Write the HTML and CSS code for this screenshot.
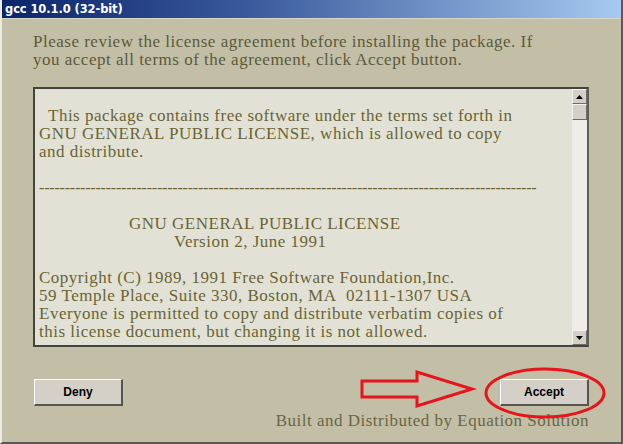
FILE: index.html
```html
<!DOCTYPE html>
<html>
<head>
<meta charset="utf-8">
<link rel="stylesheet" href="styles.css">
</head>
<body>
<div class="window">
  <div class="titlebar">gcc 10.1.0 (32-bit)</div>
  <div class="content">
    <p class="intro">Please review the license agreement before installing the package. If<br>you accept all terms of the agreement, click Accept button.</p>
    <div class="license">
      <div class="license-text">
        <p class="first">This package contains free software under the terms set forth in<br>GNU GENERAL PUBLIC LICENSE, which is allowed to copy<br>and distribute.</p>
        <p class="dashes">-------------------------------------------------------------------------------------------------</p>
        <p><span class="title1">GNU GENERAL PUBLIC LICENSE</span><br><span class="title2">Version 2, June 1991</span></p>
        <p>Copyright (C) 1989, 1991 Free Software Foundation,Inc.<br>59 Temple Place, Suite 330, Boston, MA&nbsp;&nbsp;02111-1307 USA<br>Everyone is permitted to copy and distribute verbatim copies of<br>this license document, but changing it is not allowed.</p>
      </div>
      <div class="scrollbar">
        <div class="sb-btn"><svg width="7" height="4" viewBox="0 0 7 4"><path d="M3.5 0 L7 4 L0 4 Z" fill="#000"/></svg></div>
        <div class="sb-thumb"></div>
        <div class="sb-track"></div>
        <div class="sb-btn"><svg width="7" height="4" viewBox="0 0 7 4"><path d="M0 0 L7 0 L3.5 4 Z" fill="#000"/></svg></div>
      </div>
    </div>
    <div class="actions">
      <button class="btn">Deny</button>
      <button class="btn">Accept</button>
    </div>
    <p class="credit">Built and Distributed by Equation Solution</p>
  </div>
  <svg class="annotation" width="623" height="444" viewBox="0 0 623 444">
    <polygon points="362,381 417,381 417,372 472,389 417,406 417,397 362,397" fill="none" stroke="#e8141c" stroke-width="3" stroke-linejoin="miter"/>
    <ellipse cx="545" cy="393" rx="59" ry="24" fill="none" stroke="#e8141c" stroke-width="3"/>
  </svg>
</div>
</body>
</html>
```
FILE: styles.css
```css
html, body {
  margin: 0;
  padding: 0;
  background: #c3bfa6;
}

.window {
  position: relative;
  width: 623px;
  height: 444px;
  box-sizing: border-box;
  background: #c3bfa6;
  border-left: 2px solid #ecebe2;
  border-right: 2px solid #5a5a55;
  border-bottom: 2px solid #5a5a55;
  overflow: hidden;
  display: flex;
  flex-direction: column;
}

.titlebar {
  height: 18px;
  margin-left: -2px;
  padding-left: 5px;
  background: linear-gradient(to right, #0a246a 0%, #3a5a9c 40%, #a6caf0 100%);
  color: #fff;
  font-family: "DejaVu Sans", sans-serif;
  font-weight: bold;
  font-size: 11.5px;
  line-height: 18px;
  letter-spacing: -0.1px;
  border-bottom: 1px solid #d8d6c8;
}

.content {
  flex: 1;
  display: flex;
  flex-direction: column;
  padding: 0 32px 0 31px;
}

.intro {
  margin: 14px 0 0 0;
  font-family: "Liberation Serif", serif;
  font-size: 17px;
  line-height: 18px;
  letter-spacing: 0.5px;
  color: #5b5a3a;
}

.license {
  margin-top: 18px;
  height: 260px;
  box-sizing: border-box;
  border: 2px solid #44443e;
  border-right-color: #5e5e58;
  background: #e2e1d5;
  display: flex;
}

.license-text {
  flex: 1;
  padding: 18px 0 0 4px;
  font-family: "Liberation Serif", serif;
  font-size: 17px;
  line-height: 18px;
  letter-spacing: 0.5px;
  color: #6a6434;
  overflow: hidden;
}

.license-text p {
  margin: 0 0 18px 0;
  white-space: nowrap;
}

.license-text .first {
  text-indent: 9px;
}

.license-text .dashes {
  letter-spacing: -0.2px;
  font-size: 16px;
}

.title1 {
  padding-left: 90px;
}

.title2 {
  padding-left: 135px;
}

.scrollbar {
  width: 15px;
  display: flex;
  flex-direction: column;
  background: #f1f0ea;
}

.sb-btn,
.sb-thumb {
  box-sizing: border-box;
  width: 15px;
  background: #d4d0c8;
  border-top: 1px solid #f4f3ee;
  border-left: 1px solid #f4f3ee;
  border-right: 1px solid #6e6c64;
  border-bottom: 1px solid #6e6c64;
  display: flex;
  align-items: center;
  justify-content: center;
}

.sb-btn {
  height: 15px;
}

.sb-thumb {
  height: 16px;
}

.sb-track {
  flex: 1;
  background-color: #eeede7;
}

.actions {
  margin-top: 32px;
  display: flex;
  justify-content: space-between;
  padding-left: 1px;
}

.btn {
  width: 89px;
  height: 27px;
  box-sizing: border-box;
  background: #d4d0c8;
  border-top: 1px solid #ffffff;
  border-left: 1px solid #ffffff;
  border-right: 2px solid #55554f;
  border-bottom: 2px solid #55554f;
  font-family: "Liberation Sans", sans-serif;
  font-weight: bold;
  font-size: 12px;
  color: #000;
  padding: 0;
}

.credit {
  margin: 6px 0 0 0;
  align-self: flex-end;
  font-family: "Liberation Serif", serif;
  font-size: 17px;
  line-height: 18px;
  letter-spacing: 0.5px;
  color: #6a6644;
}

.annotation {
  position: absolute;
  left: -2px;
  top: 0;
  pointer-events: none;
}
```
